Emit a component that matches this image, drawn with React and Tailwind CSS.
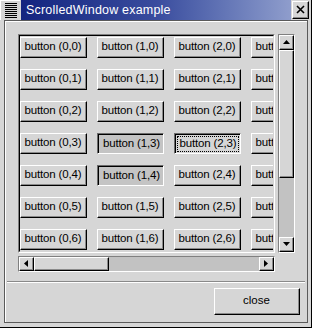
import React from "react";

const font = { fontFamily: '"Liberation Sans", Arial, sans-serif' };

function Btn({ label, state }) {
  if (state === "pressed") {
    return (
      <div className="h-[21px] w-[67px] border border-t-[#6b6b6b] border-l-[#6b6b6b] border-b-white border-r-white bg-[#c4c4c4]">
        <div className="h-full w-full border-t border-l border-t-black border-l-black flex items-center justify-center pl-[1px] text-[11.5px] tracking-[-0.15px] text-black whitespace-nowrap">
          {label}
        </div>
      </div>
    );
  }
  if (state === "focus") {
    return (
      <div className="h-[21px] w-[67px] border border-t-[#6b6b6b] border-l-[#6b6b6b] border-b-white border-r-white bg-[#d6d6d6]">
        <div className="h-full w-full border-t border-l border-t-black border-l-black p-[1px]">
          <div className="h-full w-full border border-dotted border-black flex items-center justify-center text-[11.5px] tracking-[-0.15px] text-black whitespace-nowrap">
            {label}
          </div>
        </div>
      </div>
    );
  }
  return (
    <div className="h-[21px] w-[67px] border border-t-white border-l-white border-b-black border-r-black bg-[#d6d6d6]">
      <div className="h-full w-full border-b border-r border-b-[#8a8a8a] border-r-[#8a8a8a] flex items-center justify-center text-[11.5px] tracking-[-0.15px] text-black whitespace-nowrap">
        {label}
      </div>
    </div>
  );
}

function Raised({ className = "", children }) {
  return (
    <div className={"border border-t-white border-l-white border-b-black border-r-black bg-[#d6d6d6] " + className}>
      <div className="h-full w-full border-b border-r border-b-[#8a8a8a] border-r-[#8a8a8a] flex items-center justify-center">
        {children}
      </div>
    </div>
  );
}

function Tri({ dir }) {
  const pts = {
    up: "0,4 7,4 3.5,0",
    down: "0,0 7,0 3.5,4",
    left: "4,0 4,7 0,3.5",
    right: "0,0 0,7 4,3.5",
  }[dir];
  const horiz = dir === "left" || dir === "right";
  return (
    <svg width={horiz ? 4 : 7} height={horiz ? 7 : 4} viewBox={horiz ? "0 0 4 7" : "0 0 7 4"}>
      <polygon points={pts} fill="black" />
    </svg>
  );
}

export default function App() {
  const rows = [0, 1, 2, 3, 4, 5, 6];
  const cols = [0, 1, 2, 3];
  const stateOf = (c, r) => {
    if (c === 1 && (r === 3 || r === 4)) return "pressed";
    if (c === 2 && r === 3) return "focus";
    return "normal";
  };
  return (
    <div style={font} className="w-[312px] h-[328px] bg-[#d6d6d6] flex flex-col border-r border-b border-r-black border-b-black overflow-hidden">
      {/* title bar */}
      <div className="h-[20px] flex shrink-0">
        <div className="w-[20px] h-[20px] bg-[#d6d6d6] border-l border-t border-l-white border-t-white flex flex-col gap-[1px] pt-[2px] pl-[4px]">
          {[0, 1, 2, 3, 4, 5, 6, 7].map((i) => (
            <div key={i} className="h-[1px] w-[12px] bg-black" />
          ))}
        </div>
        <div className="ml-[1px] w-[270px] h-[20px] bg-gradient-to-r from-[#14247f] via-[#3a4c9e] to-[#8f9dcc] flex items-center pl-[5px]">
          <span className="text-white text-[12.5px] leading-[20px] tracking-[0.2px]">ScrolledWindow example</span>
        </div>
        <div className="ml-[1px] mt-[1px] w-[17px] h-[18px] border border-t-white border-l-white border-b-black border-r-black bg-[#d6d6d6]">
          <div className="w-full h-full border-b border-r border-b-[#8a8a8a] border-r-[#8a8a8a] flex items-center justify-center">
            <svg width="9" height="9" viewBox="0 0 9 9">
              <path d="M1 1 L8 8 M8 1 L1 8" stroke="black" strokeWidth="1.6" />
            </svg>
          </div>
        </div>
      </div>

      {/* body */}
      <div className="flex-1 pl-[4px] pr-[3px] pb-[4px] flex flex-col">
        <div className="flex-1 border border-[#5a5a5a]">
          <div className="h-full w-full border-t border-l border-t-white border-l-white flex flex-col">
            {/* scrolled window */}
            <div className="mt-[12px] mx-[12px] flex flex-col gap-[3px]">
              <div className="flex gap-[3px]">
                {/* viewport */}
                <div className="w-[257px] h-[219px] border border-t-[#808080] border-l-[#808080] border-b-white border-r-white">
                  <div className="w-full h-full border border-t-black border-l-black border-b-[#d6d6d6] border-r-[#d6d6d6] overflow-hidden">
                    <div className="w-max grid grid-cols-[repeat(4,67px)] gap-x-[10px] gap-y-[11px] pt-[1px]">
                      {rows.map((r) =>
                        cols.map((c) => (
                          <Btn key={c + "-" + r} label={`button (${c},${r})`} state={stateOf(c, r)} />
                        ))
                      )}
                    </div>
                  </div>
                </div>
                {/* vertical scrollbar */}
                <div className="w-[17px] h-[219px] border border-t-[#808080] border-l-[#808080] border-b-white border-r-white bg-[#c2c2c2] flex flex-col">
                  <Raised className="h-[15px] w-full shrink-0">
                    <Tri dir="up" />
                  </Raised>
                  <Raised className="h-[128px] w-full shrink-0" />
                  <div className="flex-1" />
                  <Raised className="h-[15px] w-full shrink-0">
                    <Tri dir="down" />
                  </Raised>
                </div>
              </div>
              {/* horizontal scrollbar */}
              <div className="w-[257px] h-[16px] border border-t-[#808080] border-l-[#808080] border-b-white border-r-white bg-[#c2c2c2] flex">
                <Raised className="w-[15px] h-full shrink-0">
                  <Tri dir="left" />
                </Raised>
                <Raised className="w-[75px] h-full shrink-0" />
                <div className="flex-1" />
                <Raised className="w-[15px] h-full shrink-0">
                  <Tri dir="right" />
                </Raised>
              </div>
            </div>

            {/* separator */}
            <div className="mt-[9px] ml-[1px] mr-[2px] h-[2px] border-t border-b border-t-[#8a8a8a] border-b-white" />

            {/* close button */}
            <div className="mt-[5px] flex justify-end pr-[7px]">
              <Raised className="w-[86px] h-[27px]">
                <span className="text-[11.5px] text-black">close</span>
              </Raised>
            </div>
          </div>
        </div>
      </div>
    </div>
  );
}
